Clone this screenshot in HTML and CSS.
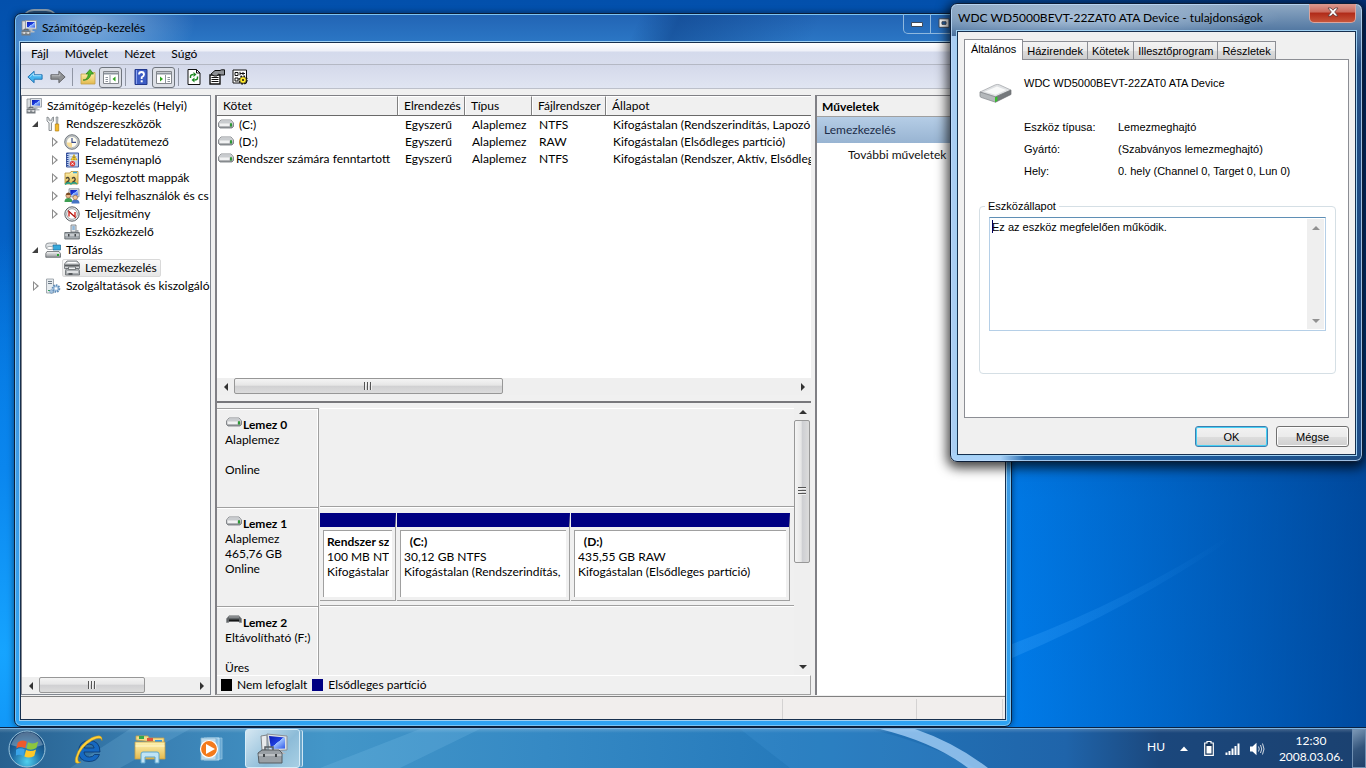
FILE: index.html
```html
<!DOCTYPE html>
<html lang="hu">
<head>
  <meta charset="UTF-8">
  <title>Számítógép-kezelés</title>
  <link rel="stylesheet" href="styles.css">
</head>
<body>
<svg class="defs" aria-hidden="true">
  <defs>
    <linearGradient id="metal" x1="0" y1="0" x2="0" y2="1">
      <stop offset="0" stop-color="#fafafa"/><stop offset="1" stop-color="#8e9296"/>
    </linearGradient>
    <linearGradient id="screen" x1="0" y1="0" x2="1" y2="1">
      <stop offset="0" stop-color="#0a1bb0"/><stop offset=".5" stop-color="#1f3fe0"/><stop offset=".52" stop-color="#9cc0ff"/><stop offset="1" stop-color="#2a55e8"/>
    </linearGradient>
    <linearGradient id="gold" x1="0" y1="0" x2="0" y2="1">
      <stop offset="0" stop-color="#fff3b0"/><stop offset="1" stop-color="#e3b94e"/>
    </linearGradient>
    <linearGradient id="ray" x1="0" y1="0" x2="1" y2="0">
      <stop offset="0" stop-color="#3fa8ff" stop-opacity=".3"/><stop offset="1" stop-color="#3fa8ff" stop-opacity="0"/>
    </linearGradient>
    <radialGradient id="orb" cx=".5" cy=".85" r=".9">
      <stop offset="0" stop-color="#4fd0ee"/><stop offset=".45" stop-color="#1f6ea6"/><stop offset="1" stop-color="#0c2f5c"/>
    </radialGradient>
  </defs>
  <symbol id="i-computer" viewBox="0 0 16 16">
    <path d="M1 1h4v9H1z" fill="#d8dcdf" stroke="#7d8388" stroke-width=".7"/>
    <path d="M4.5.5h11v8.6h-11z" fill="#dfe3e8" stroke="#8a9097" stroke-width=".8"/>
    <path d="M6 2h8v5.6H6z" fill="url(#screen)"/>
    <path d="M8.500 9h3v2h2v1.500h-6z" fill="#b8bdc2"/>
    <path d="M.5 10.500h9v5h-9z" fill="#757b80"/>
    <path d="M3 10.500V9.300h4v1.200" fill="none" stroke="#5c6165"/>
    <path d="M.5 12.800h9" stroke="#c9cdd0" stroke-width=".8"/>
    <path d="M2.500 12h1.200v2H2.500zM6.500 12h1.200v2H6.500z" fill="#f0f0f0"/>
  </symbol>
  <symbol id="i-tools" viewBox="0 0 16 16">
    <path d="M2 1v4l2 2v7.500h2.500V7l2-2V1L7 2v2.200H4V2z" fill="#eceeef" stroke="#74797d" stroke-width=".8"/>
    <path d="M11 1h2l-.4 7h-1.200z" fill="#c5c9cc" stroke="#777c80" stroke-width=".6"/>
    <path d="M10.300 8h3.400v7h-3.400z" fill="#f4ba2a" stroke="#b57f10" stroke-width=".7"/>
  </symbol>
  <symbol id="i-clock" viewBox="0 0 16 16">
    <circle cx="8" cy="8" r="7.300" fill="#c3c7ca" stroke="#686e73" stroke-width=".9"/>
    <circle cx="8" cy="8" r="5.500" fill="#fffdf0" stroke="#9aa0a5" stroke-width=".6"/>
    <path d="M8 8.500v5a5.500 5.500 0 0 1-5.400-5z" fill="#f7dc98"/>
    <path d="M8 4v4.300h4" fill="none" stroke="#3a4c8a" stroke-width="1.200"/>
  </symbol>
  <symbol id="i-eventlog" viewBox="0 0 16 16">
    <path d="M2.500 1h12v14h-12z" fill="#b9cdee" stroke="#40589c"/>
    <path d="M6 3.500h7M6 6h7M6 8.500h7" stroke="#e9f0fb"/>
    <path d="M3.500 1v14" stroke="#2c4a9a" stroke-width="2" stroke-dasharray="1 1"/>
    <path d="M10 2.500l3 5.500H7z" fill="#ffd83c" stroke="#b98d00" stroke-width=".6"/>
    <path d="M10 4.500v1.800M10 6.900v.6" stroke="#222" stroke-width=".8"/>
    <circle cx="8.500" cy="11.700" r="2.700" fill="#dd3a35"/>
    <path d="M7.400 10.600l2.200 2.200M9.600 10.600l-2.200 2.200" stroke="#fff" stroke-width=".9"/>
  </symbol>
  <symbol id="i-shares" viewBox="0 0 16 16">
    <path d="M1 3h5l1-1.500h7V14H1z" fill="url(#gold)" stroke="#b99036" stroke-width=".8"/>
    <path d="M9 2.500h4" stroke="#3aa8d8" stroke-width="1.500"/>
    <path d="M2 8.500q2-2 3 0t-3 4h3.500M8 8.500q2-2 3 0t-3 4h3.500" fill="none" stroke="#4b4433" stroke-width="1.300"/>
    <path d="M1 14.500q3-3 6-.5 3-2.500 6 0" fill="none" stroke="#28a58a" stroke-width="1.500"/>
  </symbol>
  <symbol id="i-users" viewBox="0 0 16 16">
    <path d="M5 .8h10v8H5z" fill="#e0e4ea" stroke="#80868c" stroke-width=".8"/>
    <path d="M6.300 2h7.500v5.500H6.300z" fill="url(#screen)"/>
    <path d="M.5 14q0-4 4-4t4 4z" fill="#3d9e52"/>
    <path d="M7.500 15.500q0-4 4-4t4 4z" fill="#4573c4"/>
    <circle cx="4.300" cy="7.600" r="2.400" fill="#e8b88a" stroke="#87562e" stroke-width=".6"/>
    <circle cx="11.200" cy="9.500" r="2.300" fill="#f0c79d" stroke="#87562e" stroke-width=".6"/>
    <path d="M2 7q0-2.500 2.300-2.500T6.600 7z" fill="#7a4a22"/>
  </symbol>
  <symbol id="i-perf" viewBox="0 0 16 16">
    <circle cx="8" cy="8" r="7.200" fill="#e8eaeb" stroke="#595f64"/>
    <circle cx="8" cy="8" r="5.300" fill="#fff" stroke="#8d9296" stroke-width=".8"/>
    <path d="M5 10.500V5.500l6 5.500V6" fill="none" stroke="#d42a22" stroke-width="1.400"/>
    <path d="M3.800 4.300l8 7.500" stroke="#8c1512" stroke-width=".8"/>
  </symbol>
  <symbol id="i-devmgr" viewBox="0 0 16 16">
    <path d="M7 1h5v7H7z" fill="#e4e7e9" stroke="#6f757a" stroke-width=".8"/>
    <path d="M8.300 3h2.500M8.300 5h2.500" stroke="#3c88c8"/>
    <path d="M12 6h2.500v3H12z" fill="#a6abb0"/>
    <path d="M.8 8.500h14.500v6.500H.8z" fill="#a5abb0" stroke="#5b6166" stroke-width=".8"/>
    <path d="M1 11h14" stroke="#e6e8ea"/>
    <path d="M4 10h1.500v2.500H4zM10.500 10H12v2.500h-1.500z" fill="#45494c"/>
  </symbol>
  <symbol id="i-storage" viewBox="0 0 16 16">
    <path d="M.8 3q0-2 3.500-2h7v6h-8q-2.500 0-2.500-2z" fill="#e2e5e7" stroke="#7c8286" stroke-width=".8"/>
    <path d="M8 3h7.500v5H8z" fill="#36a9dc" stroke="#1c6a98" stroke-width=".7"/>
    <ellipse cx="5" cy="6" rx="3.300" ry="1.600" fill="#fff" stroke="#8d9398" stroke-width=".7"/>
    <path d="M2 9.500h12l1.500 2v3.800H.8v-3.800z" fill="url(#metal)" stroke="#62676b" stroke-width=".8"/>
    <path d="M12 12h2v2h-2z" fill="#28a532"/>
  </symbol>
  <symbol id="i-diskmgmt" viewBox="0 0 16 16">
    <path d="M3 1h10l2.500 3v4.500H.5V4z" fill="#d3d6d8" stroke="#63686c" stroke-width=".8"/>
    <path d="M1 4.500h14v2H1z" fill="#5a5e61"/>
    <path d="M3.500 2.500h9" stroke="#fff"/>
    <path d="M2.500 8.500h11.500l1.500 2V15H1.500v-4.500z" fill="#a9adb0" stroke="#63686c" stroke-width=".8"/>
    <path d="M4.500 7h7v2.500h-7z" fill="#eef0f1" stroke="#55595c" stroke-width=".7"/>
    <path d="M3 12h11" stroke="#f2f3f4" stroke-width="1.500"/>
    <path d="M4.500 15v-2h4v2" fill="#55595c"/>
  </symbol>
  <symbol id="i-services" viewBox="0 0 16 16">
    <path d="M1.500 1h7v14h-7z" fill="#e6ebef" stroke="#8f979e" stroke-width=".8"/>
    <path d="M3 3.500h4M3 5.500h4" stroke="#6c7a86"/>
    <path d="M3 12.500h2" stroke="#2aa34e"/>
    <circle cx="11" cy="10.500" r="3.300" fill="#a8c6e2" stroke="#5f8cb8" stroke-width="2" stroke-dasharray="1.500 1"/>
    <circle cx="11" cy="10.500" r="1.200" fill="#fff"/>
    <circle cx="6.500" cy="13.500" r="1.800" fill="#a8c6e2" stroke="#5f8cb8" stroke-dasharray="1 .7"/>
  </symbol>
  <symbol id="i-drive" viewBox="0 0 16 10">
    <path d="M3 1h10l2.500 3v3.500L14 9H2L.5 7.500V4z" fill="url(#metal)" stroke="#707478" stroke-width=".8"/>
    <path d="M3.200 1.600h9.600L14.500 4h-13z" fill="#c9cccf"/>
    <path d="M1.500 4.500h10v2.700h-10z" fill="#f1f2f3"/>
    <path d="M12 4.300h2v3.200h-2z" fill="#2c9a35"/>
  </symbol>
  <symbol id="i-removable" viewBox="0 0 16 10">
    <path d="M3 .8h10l2.500 3v3.700h-2l-1-1.500h-9l-1 1.500h-2V3.800z" fill="#606467" stroke="#8a8e91" stroke-width=".8"/>
    <path d="M3 2h10" stroke="#a8abad"/>
    <path d="M3 4.500h10v2H3z" fill="#151617"/>
  </symbol>
  <symbol id="i-flag" viewBox="0 0 20 20">
    <path d="M1.500 4.500Q5 1.800 9 4L7.600 9.300Q4 7.200.2 9.500z" fill="#ee5a2c"/>
    <path d="M10 4.400q4 2.200 8.500-.6L17 9.200q-4.500 2.500-8.300.4z" fill="#8cc63e"/>
    <path d="M0 10.600q3.500-2.300 7.300-.2L6 15.800q-4-2-7 .2z" fill="#3aa4e8"/>
    <path d="M8.400 10.800q4 2 8.300-.4l-1.500 5.400q-4.500 2.500-8.200.4z" fill="#ffc928"/>
  </symbol>
</svg>

<main class="desktop">
  <svg class="wallpaper" viewBox="0 0 1366 768" preserveAspectRatio="none" aria-hidden="true">
    <path d="M1012 644Q1130 600 1230 535V540Q1130 608 1012 658z" fill="url(#ray)"/>
  </svg>
  <span class="bin"></span>

  <section class="window main-window">
    <header class="titlebar">
      <svg class="icon"><use href="#i-computer"/></svg>
      <span class="caption">Számítógép-kezelés</span>
      <div class="winbuttons">
        <button aria-label="Kis méret"><svg viewBox="0 0 12 10"><path d="M.5 4.500h11V8.500H.5z" fill="#fff" stroke="#3e4a5a"/></svg></button>
        <button aria-label="Teljes méret"><svg viewBox="0 0 12 10"><path d="M1 .8h10v8.500H1zM4 3.800h4v2.500H4z" fill="#fff" fill-rule="evenodd" stroke="#3e4a5a"/></svg></button>
        <button class="wide" aria-label="Bezárás"></button>
      </div>
    </header>

    <div class="client">
      <nav class="menubar">
        <button>Fájl</button>
        <button>Művelet</button>
        <button>Nézet</button>
        <button>Súgó</button>
      </nav>
      <div class="toolbar">
        <button aria-label="Vissza"><svg viewBox="0 0 18 16"><path d="M1 8l7-6.500v4h9v5H8v4z" fill="#45b4ee" stroke="#1c6cae"/><path d="M3 8l4.300-4v2.600H16" fill="none" stroke="#b5e6ff"/></svg></button>
        <button aria-label="Előre"><svg viewBox="0 0 18 16"><path d="M17 8l-7-6.500v4H1v5h9v4z" fill="#8e9093" stroke="#5b5d60"/><path d="M2 6.600h9V4" fill="none" stroke="#c2c4c6"/></svg></button>
        <span class="sep"></span>
        <button aria-label="Fel"><svg viewBox="0 0 16 16"><path d="M1 5h5l1.500-1.500H15V15H1z" fill="url(#gold)" stroke="#c2a14c" stroke-width=".8"/><path d="M3 11q4 .5 5.500-6H6l4-4.500L13.500 5H11Q9 12 3 11z" fill="#4cb82e" stroke="#2b7f18" stroke-width=".7"/></svg></button>
        <button class="pressed" aria-label="Konzolfa"><svg viewBox="0 0 16 16"><path d="M.5 2.500h15v12H.5z" fill="#fff" stroke="#82868c"/><path d="M1 4.500h14" stroke="#8d949e" stroke-width="2"/><path d="M2.500 8.500H5M2.500 10.500H5M2.500 12.500H5M7 6v8" stroke="#8d949e"/><path d="M12.500 7.500v5L9.500 10z" fill="#2fa51f"/></svg></button>
        <span class="sep"></span>
        <button aria-label="Súgó"><svg viewBox="0 0 16 16"><path d="M2 .5h12v15H2z" fill="#3c5cc4" stroke="#22388c"/><path d="M3.500 1v14" stroke="#8aa2ee"/><path d="M6 5.500Q6 3 8.500 3T11 5.500Q11 7 8.700 8.300V10" fill="none" stroke="#fff" stroke-width="1.800"/><path d="M7.700 11.300h2v2h-2z" fill="#fff"/></svg></button>
        <button class="pressed" aria-label="Művelet panel"><svg viewBox="0 0 16 16"><path d="M.5 2.500h15v12H.5z" fill="#fff" stroke="#82868c"/><path d="M1 4.500h14" stroke="#8d949e" stroke-width="2"/><path d="M9.500 6v8M11.500 8.500H14M11.500 10.500H14M11.500 12.500H14" stroke="#8d949e"/><path d="M4 7.500v5L7 10z" fill="#2fa51f"/></svg></button>
        <span class="sep"></span>
        <button aria-label="Frissítés"><svg viewBox="0 0 16 16"><path d="M2 .5h8.500L14 4v11.500H2z" fill="#fff" stroke="#111"/><path d="M10.500.5V4H14" fill="none" stroke="#111"/><path d="M4.500 9V7.500q0-2 3-2" fill="none" stroke="#1d8a22" stroke-width="1.400"/><path d="M7.500 3v5l3-2.500zM8.500 8.500v5l-3-2.500z" fill="#1d8a22"/><path d="M11.500 7.500V9q0 2-3 2" fill="none" stroke="#1d8a22" stroke-width="1.400"/></svg></button>
        <button aria-label="Tulajdonságok"><svg viewBox="0 0 16 16"><path d="M1 6h10v9H1z" fill="#fff" stroke="#111" stroke-width="1.400"/><path d="M2.500 8.500h7M2.500 10.500h7M2.500 12.500h7" stroke="#111"/><path d="M2 5l4-3.500h5L12.500.8h3V6h-3.500L9.500 5 8 7H5z" fill="#8d9094" stroke="#111"/></svg></button>
        <button aria-label="Beállítások"><svg viewBox="0 0 16 16"><path d="M1 1h13.500v13H1z" fill="#fff" stroke="#111"/><path d="M3 3.500h3v3H3zM3 9h3v3H3z" fill="#fff" stroke="#111"/><path d="M8 4.500h5M8 2.800v3.500M11 3v3" stroke="#111"/><circle cx="11" cy="11" r="3.200" fill="none" stroke="#111" stroke-width="3" stroke-dasharray="1.300 1.213"/><circle cx="11" cy="11" r="3.300" fill="#ffe92c" stroke="#111" stroke-width=".6"/><circle cx="11" cy="11" r="1" fill="#111"/></svg></button>
      </div>

      <div class="panes">
        <aside class="pane tree-pane">
          <ul class="tree">
            <li class="root"><svg class="icon"><use href="#i-computer"/></svg><span>Számítógép-kezelés (Helyi)</span></li>
            <li class="open"><i></i><svg class="icon"><use href="#i-tools"/></svg><span>Rendszereszközök</span></li>
            <li class="sub closed"><i></i><svg class="icon"><use href="#i-clock"/></svg><span>Feladatütemező</span></li>
            <li class="sub closed"><i></i><svg class="icon"><use href="#i-eventlog"/></svg><span>Eseménynapló</span></li>
            <li class="sub closed"><i></i><svg class="icon"><use href="#i-shares"/></svg><span>Megosztott mappák</span></li>
            <li class="sub closed"><i></i><svg class="icon"><use href="#i-users"/></svg><span>Helyi felhasználók és cs</span></li>
            <li class="sub closed"><i></i><svg class="icon"><use href="#i-perf"/></svg><span>Teljesítmény</span></li>
            <li class="sub"><i></i><svg class="icon"><use href="#i-devmgr"/></svg><span>Eszközkezelő</span></li>
            <li class="open"><i></i><svg class="icon"><use href="#i-storage"/></svg><span>Tárolás</span></li>
            <li class="sub selected"><i></i><div><svg class="icon"><use href="#i-diskmgmt"/></svg><span>Lemezkezelés</span></div></li>
            <li class="closed"><i></i><svg class="icon"><use href="#i-services"/></svg><span>Szolgáltatások és kiszolgáló</span></li>
          </ul>
          <div class="scroll-h">
            <button class="left" aria-label="Balra"></button>
            <div class="track"><div class="thumb tree-thumb"><b></b></div></div>
            <button class="right" aria-label="Jobbra"></button>
          </div>
        </aside>

        <div class="center">
          <div class="volumes">
            <div class="volume-list">
              <table>
                <colgroup><col class="c-name"><col class="c-layout"><col class="c-type"><col class="c-fs"><col></colgroup>
                <thead>
                <tr><th>Kötet</th><th>Elrendezés</th><th>Típus</th><th>Fájlrendszer</th><th>Állapot</th></tr>
                </thead>
                <tbody>
                <tr><td><svg class="drive"><use href="#i-drive"/></svg>&nbsp;(C:)</td><td>Egyszerű</td><td>Alaplemez</td><td>NTFS</td><td>Kifogástalan (Rendszerindítás, Lapozó</td></tr>
                <tr><td><svg class="drive"><use href="#i-drive"/></svg>&nbsp;(D:)</td><td>Egyszerű</td><td>Alaplemez</td><td>RAW</td><td>Kifogástalan (Elsődleges partíció)</td></tr>
                <tr><td><svg class="drive"><use href="#i-drive"/></svg>Rendszer számára fenntartott</td><td>Egyszerű</td><td>Alaplemez</td><td>NTFS</td><td>Kifogástalan (Rendszer, Aktív, Elsődleg</td></tr>
                </tbody>
              </table>
            </div>
            <div class="scroll-h">
              <button class="left" aria-label="Balra"></button>
              <div class="track"><div class="thumb list-thumb"><b></b></div></div>
              <button class="right" aria-label="Jobbra"></button>
            </div>
          </div>

          <div class="graphic">
            <div class="graphic-body">
              <div class="disks">
                <div class="disk">
                  <div class="disk-label">
                    <strong><svg class="drive"><use href="#i-drive"/></svg>Lemez 0</strong>
                    <p>Alaplemez</p><p></p><p>Online</p>
                  </div>
                  <div class="parts"></div>
                </div>
                <div class="disk">
                  <div class="disk-label">
                    <strong><svg class="drive"><use href="#i-drive"/></svg>Lemez 1</strong>
                    <p>Alaplemez</p><p>465,76 GB</p><p>Online</p>
                  </div>
                  <div class="parts">
                    <div class="part p-sys"><div><strong>Rendszer sz</strong><p>100 MB NTFS</p><p>Kifogástalan</p></div></div>
                    <div class="part p-c"><div><strong>&nbsp; (C:)</strong><p>30,12 GB NTFS</p><p>Kifogástalan (Rendszerindítás,</p></div></div>
                    <div class="part p-d"><div><strong>&nbsp; (D:)</strong><p>435,55 GB RAW</p><p>Kifogástalan (Elsődleges partíció)</p></div></div>
                  </div>
                </div>
                <div class="disk">
                  <div class="disk-label">
                    <strong><svg class="drive"><use href="#i-removable"/></svg>Lemez 2</strong>
                    <p>Eltávolítható (F:)</p><p></p><p>Üres</p>
                  </div>
                  <div class="parts"></div>
                </div>
              </div>
              <div class="scroll-v">
                <button class="up" aria-label="Fel"></button>
                <div class="track"><div class="thumb"><b></b></div></div>
                <button class="down" aria-label="Le"></button>
              </div>
            </div>
            <div class="legend">
              <span class="swatch black"></span>Nem lefoglalt
              <span class="swatch navy"></span>Elsődleges partíció
            </div>
          </div>
        </div>

        <aside class="pane actions">
          <h2>Műveletek</h2>
          <h3>Lemezkezelés</h3>
          <a href="#">További műveletek</a>
        </aside>
      </div>

      <footer class="statusbar"><span></span><span></span><span></span></footer>
    </div>
  </section>

  <section class="window dialog">
    <header class="titlebar">
      <span class="caption">WDC WD5000BEVT-22ZAT0 ATA Device - tulajdonságok</span>
      <button class="close" aria-label="Bezárás"><svg viewBox="0 0 12 10"><path d="M1 1h3l2 2.200L8 1h3L7.700 5 11 9H8L6 6.800 4 9H1l3.300-4z" fill="#fff" stroke="#5c3a3a" stroke-width=".8"/></svg></button>
    </header>
    <div class="client">
      <div class="tabs" role="tablist">
        <button class="active" role="tab">Általános</button>
        <button role="tab">Házirendek</button>
        <button role="tab">Kötetek</button>
        <button role="tab">Illesztőprogram</button>
        <button role="tab">Részletek</button>
      </div>
      <div class="tabpanel">
        <div class="device">
          <svg viewBox="0 0 34 22">
            <path d="M1 10L17 2.500q2-.6 4 0L33 8 17 15z" fill="#dfe1e3" stroke="#9b9fa3" stroke-width=".7"/>
            <path d="M6 9.700L18.500 4.200 28 8l-11 4.800z" fill="#f8f9f9"/>
            <path d="M1 10l16 5v5.500L2 15.500Q1 15 1 14z" fill="#b4b8bb" stroke="#7d8185" stroke-width=".7"/>
            <path d="M17 15L33 8v4.500L17 20.500z" fill="#75797c" stroke="#6d7174" stroke-width=".7"/>
            <path d="M16.500 15.500l2.500-1v4.700l-2.500 1z" fill="#35c02c"/>
          </svg>
          <span>WDC WD5000BEVT-22ZAT0 ATA Device</span>
        </div>
        <dl>
          <dt>Eszköz típusa:</dt><dd>Lemezmeghajtó</dd>
          <dt>Gyártó:</dt><dd>(Szabványos lemezmeghajtó)</dd>
          <dt>Hely:</dt><dd>0. hely (Channel 0, Target 0, Lun 0)</dd>
        </dl>
        <fieldset>
          <legend><label for="status">Eszközállapot</label></legend>
          <div class="status-box">
            <textarea id="status" readonly>Ez az eszköz megfelelően működik.</textarea>
            <span class="caret"></span>
            <div class="scroll-v disabled">
              <button class="up" aria-label="Fel" disabled></button>
              <div class="track"></div>
              <button class="down" aria-label="Le" disabled></button>
            </div>
          </div>
        </fieldset>
      </div>
      <div class="dialog-buttons">
        <button class="default">OK</button>
        <button>Mégse</button>
      </div>
    </div>
  </section>

  <footer class="taskbar">
    <svg class="glow" viewBox="0 0 1366 40" preserveAspectRatio="none" aria-hidden="true">
      <path d="M70 40L130 0H190L120 40zM320 40L420 0H480L400 40z" fill="#9fe0ff" opacity=".15"/>
      <path d="M740 0h130q60 15 105 40H790z" fill="#4aa0e0" opacity=".2"/>
      <path d="M880 0H915Q955 14 988 40H968Q935 14 880 0z" fill="#b5dbff" opacity=".7"/>
    </svg>
    <button class="start" aria-label="Start">
      <svg viewBox="0 0 38 38"><circle cx="19" cy="19" r="18" fill="url(#orb)" stroke="#9cc6dd" stroke-width="1"/><path d="M3 15Q8 2 19 2t16 13Q19 21 3 15z" fill="#fff" opacity=".28"/><use href="#i-flag" x="8" y="7" width="24" height="24"/></svg>
    </button>
    <button class="task" aria-label="Internet Explorer">
      <svg viewBox="0 0 32 32"><path d="M27 19H11q.5 5 5.500 5 3.500 0 5-2.500h5Q24 28.500 16 28.500 6 28.500 5.500 18.500 6 8 16 7.500q11 0 11 11.500zM11.200 15h10q-.5-4-5-4t-5 4z" fill="#1668c0" stroke="#08366f" stroke-width=".8"/><path d="M8 29Q1 33 2.500 25 6 11 19 4.500 30 0 29 7.500 28 3 19 7.500 8 14 5 24q-1 6 3 5z" fill="#ffd23a" stroke="#c58f10" stroke-width=".5"/></svg>
    </button>
    <button class="task" aria-label="Intéző">
      <svg viewBox="0 0 32 32"><path d="M2 7V3h12l1 2h15v5z" fill="#f2dc8c" stroke="#c4a048" stroke-width=".8"/><path d="M5 3h5v3H5z" fill="#32a84a"/><path d="M13 5h6v3h-6z" fill="#e0533b"/><path d="M21 7h7v3h-7z" fill="#3b9be0"/><path d="M1 9h30v17H1z" fill="url(#gold)" stroke="#c4a048" stroke-width=".8"/><path d="M1.500 13h29" stroke="#fff7cf"/><path d="M7 30V21q0-2 2-2h14q2 0 2 2v9h-4v-6H11v6z" fill="#bfe4f6" stroke="#5ea6cc"/></svg>
    </button>
    <button class="task" aria-label="Windows Media Player">
      <svg viewBox="0 0 32 32"><path d="M12 5h15v21H12z" fill="#7db8de" opacity=".7" stroke="#b4daf0" stroke-width=".8"/><path d="M9 5h15v22H9z" fill="#8cc2e4" stroke="#c7e5f6" stroke-width=".8"/><path d="M6 5h15v22H6z" fill="#bddaec" stroke="#84b4d2" stroke-width=".8"/><circle cx="14" cy="16" r="8.500" fill="#f47a1c" stroke="#fff" stroke-width="1.200"/><path d="M11 11l9 5-9 5z" fill="#fff"/></svg>
    </button>
    <button class="task running" aria-label="Számítógép-kezelés">
      <svg viewBox="0 0 32 32"><path d="M4 3l6-1v15H5z" fill="#e8eaec" stroke="#7d8388"/><path d="M10 1l20 2v14l-18 1z" fill="#dde1e6" stroke="#8a9097"/><path d="M12 3l16 1.500v11L14 16z" fill="url(#screen)"/><path d="M20 18h5l4 3h-9z" fill="#b4b9be"/><path d="M1 20l4-3h17l3 3v10H2z" fill="#9aa0a5" stroke="#565c61"/><path d="M1.500 22h23" stroke="#e0e2e4"/><path d="M8 17v-3h8v3" fill="none" stroke="#565c61" stroke-width="1.500"/><path d="M6 21h2v3H6zM18 21h2v3h-2z" fill="#3f4447"/></svg>
    </button>
    <div class="tray">
      <span class="lang">HU</span>
      <svg class="t-up" viewBox="0 0 8 5"><path d="M0 5l4-4.500L8 5z" fill="#fff"/></svg>
      <svg class="t-bat" viewBox="0 0 10 15"><path d="M3 .5h4V2h2.300v12.300H.7V2H3z" fill="#16365c" stroke="#fff" stroke-width="1.200"/><path d="M2.500 5h5v7.500h-5z" fill="#fff"/></svg>
      <svg class="t-net" viewBox="0 0 16 12"><path d="M.5 9.500h2V12h-2zM3.500 8h2v4h-2zM6.500 5.500h2V12h-2zM9.500 3h2v9h-2zM12.500.5h2V12h-2z" fill="#fff"/></svg>
      <svg class="t-vol" viewBox="0 0 16 14"><path d="M1 4.500h2.500L7.500.8v12.400L3.500 9.500H1z" fill="#fff"/><path d="M9.500 4.500q1.500 2.500 0 5M11.500 3q2.500 4 0 8M13.500 1.500q3 5.500 0 11" fill="none" stroke="#fff" stroke-width=".8"/></svg>
      <time><span>12:30</span><span>2008.03.06.</span></time>
      <button class="show-desktop" aria-label="Asztal megjelenítése"></button>
    </div>
  </footer>
</main>
</body>
</html>
```
FILE: styles.css
```css
* {
  box-sizing: border-box;
}
body {
  margin: 0;
  font-family: Lato, "Segoe UI", sans-serif;
  font-size: 12px;
  line-height: 16px;
  color: #000;
}
button {
  font: inherit;
  color: inherit;
  margin: 0;
  padding: 0;
  border: 0;
  background: none;
}
p, h2, h3, ul, dl, dd {
  margin: 0;
  padding: 0;
}
.defs {
  position: absolute;
  width: 0;
  height: 0;
}
.icon {
  width: 16px;
  height: 16px;
  flex: none;
}
.drive {
  width: 16px;
  height: 10px;
  flex: none;
}

/* desktop */
.desktop {
  position: relative;
  height: 100vh;
  overflow: hidden;
  background:
    radial-gradient(ellipse at 0% 85%, #16a4ff 0, #0a86ee 20%, transparent 45%),
    linear-gradient(90deg, transparent 72%, rgba(0, 22, 80, .5) 100%),
    linear-gradient(180deg, #0350ac 0, #0460c4 30%, #007cea 65%, #0080f0 100%);
}
.wallpaper {
  position: absolute;
  width: 100%;
  height: 100%;
}
.bin {
  position: absolute;
  left: 22px;
  top: 9px;
  width: 36px;
  height: 12px;
  border-radius: 14px 14px 0 0;
  border-top: 2px solid #8fa3b4;
  background: #27517c;
}

/* windows */
.window {
  position: absolute;
  display: flex;
  flex-direction: column;
  border: 1px solid #0c1e38;
  border-radius: 7px;
}
.main-window {
  left: 14px;
  top: 13px;
  right: 354px;
  bottom: 41px;
  padding: 0 5px 6px;
  background:
    radial-gradient(ellipse 110px 60px at 70px 8px, rgba(190, 215, 240, .6), transparent),
    linear-gradient(115deg, transparent 62%, rgba(10, 60, 130, .5) 66%, transparent 80%) 0 0 / 100% 30px no-repeat,
    linear-gradient(180deg, #2264b4 0, #2c78c6 30px, #3f9ae4 60%, #2ea2f2 100%);
  box-shadow: inset 0 0 0 1px #7cc4f4, 0 0 6px rgba(0, 0, 0, .5);
}
.titlebar {
  display: flex;
  align-items: center;
  flex: none;
}
.main-window .titlebar {
  height: 28px;
  gap: 5px;
  padding-left: 1px;
}
.client {
  flex: 1;
  min-height: 0;
  display: flex;
  flex-direction: column;
  background: #f0f0f0;
  border: 1px solid #17304f;
  outline: 1px solid #9fd0f2;
}
.winbuttons {
  display: flex;
  align-self: flex-start;
  margin-left: auto;
  border: 1px solid #8fb8de;
  border-top: 0;
  border-radius: 0 0 5px 5px;
}
.winbuttons button {
  width: 27px;
  height: 19px;
  border-right: 1px solid #8fb8de;
}
.winbuttons .wide {
  width: 47px;
  border-right: 0;
}
.winbuttons svg {
  width: 12px;
  height: 10px;
}
.menubar {
  display: flex;
  height: 22px;
  flex: none;
  padding-left: 2px;
  background: linear-gradient(180deg, #fff 0, #eef0f8 8px, #d4daec 9px, #d8dded 100%);
  border-bottom: 1px solid #b4b8c4;
}
.menubar button {
  padding: 0 8px;
}
.toolbar {
  display: flex;
  align-items: center;
  height: 24px;
  flex: none;
  padding: 1px 0 0 2px;
  background: linear-gradient(180deg, #d4d9ea, #e0e5f2);
  border-bottom: 1px solid #bcc0ca;
}
.toolbar button {
  width: 23px;
  height: 21px;
  display: grid;
  place-items: center;
}
.toolbar svg {
  width: 16px;
  height: 16px;
}
.toolbar .pressed {
  border: 1px solid #6f757e;
  border-radius: 3px;
  background: #dcdfe6;
}
.toolbar .sep {
  width: 1px;
  height: 18px;
  margin: 0 3px;
  background: #9096a4;
}

/* panes */
.panes {
  flex: 1;
  min-height: 0;
  display: flex;
  gap: 4px;
  padding: 6px 0 1px;
}
.pane {
  background: #fff;
  border: 1px solid #828790;
  min-width: 0;
}
.tree-pane {
  width: 190px;
  flex: none;
  display: flex;
  flex-direction: column;
}
.tree {
  flex: 1;
  list-style: none;
  padding: 1px 0 0 4px;
  overflow: hidden;
}
.tree li, .tree li div {
  display: flex;
  align-items: center;
  height: 18px;
  gap: 5px;
  white-space: nowrap;
}
.tree li i {
  width: 10px;
  margin: 0 0 0 4px;
  height: 10px;
  flex: none;
}
.tree li.sub i {
  margin-left: 23px;
}
.tree .open i {
  background: #404040;
  clip-path: polygon(8px 2px, 8px 8px, 2px 8px);
}
.tree .closed i {
  background: #8c8c8c;
  clip-path: polygon(evenodd, 3px 0, 9px 5px, 3px 10px, 3px 0, 4px 2px, 4px 8px, 7px 5px, 4px 2px);
}
.tree .selected div {
  margin-left: -2px;
  padding: 0 3px 0 1px;
  border: 1px solid #d9d9d9;
  border-radius: 2px;
  background: linear-gradient(#fafafa, #e6e6e6);
}

/* scrollbars */
.scroll-h {
  display: flex;
  height: 17px;
  flex: none;
  background: #efefef;
}
.scroll-v {
  display: flex;
  flex-direction: column;
  width: 17px;
  flex: none;
  background: #efefef;
}
.track {
  flex: 1;
  min-height: 0;
}
.scroll-h button, .scroll-v button {
  width: 17px;
  height: 17px;
  flex: none;
  display: grid;
  place-items: center;
}
.scroll-h button::before, .scroll-v button::before {
  content: "";
  border: 4px solid transparent;
}
.scroll-h .left::before {
  border-right-color: #333;
  border-left: 0;
}
.scroll-h .right::before {
  border-left-color: #333;
  border-right: 0;
}
.scroll-v .up::before {
  border-bottom-color: #333;
  border-top: 0;
}
.scroll-v .down::before {
  border-top-color: #333;
  border-bottom: 0;
}
.scroll-v.disabled button::before {
  opacity: .5;
}
.thumb {
  display: grid;
  place-items: center;
  border: 1px solid #979797;
  border-radius: 2px;
}
.scroll-h .thumb {
  height: 16px;
  background: linear-gradient(180deg, #f4f4f4 0, #e6e6e6 45%, #d0d0d2 50%, #dcdcdc 100%);
}
.scroll-v .thumb {
  width: 16px;
  height: 60%;
  background: linear-gradient(90deg, #f4f4f4 0, #e6e6e6 45%, #cdced2 50%, #dcdcdc 100%);
}
.thumb b {
  width: 8px;
  height: 8px;
}
.scroll-h .thumb b {
  background: repeating-linear-gradient(90deg, #555 0 1px, #f0f0f0 1px 2px, transparent 2px 3px);
}
.scroll-v .thumb b {
  background: repeating-linear-gradient(180deg, #555 0 1px, #f0f0f0 1px 2px, transparent 2px 3px);
}
.tree-thumb {
  width: 69%;
}
.list-thumb {
  width: 48%;
}

/* volume list */
.center {
  width: 596px;
  flex: none;
  display: flex;
  flex-direction: column;
  border-left: 2px solid #808085;
  border-top: 1px solid #808085;
  border-bottom: 1px solid #a0a0a0;
}
.volumes {
  flex: 1;
  min-height: 0;
  display: flex;
  flex-direction: column;
  padding-bottom: 6px;
}
.volume-list {
  flex: 1;
  background: #fff;
  overflow: hidden;
}
table {
  width: 100%;
  table-layout: fixed;
  border-collapse: separate;
  border-spacing: 0;
}
.c-name { width: 181px; }
.c-layout { width: 67px; }
.c-type { width: 67px; }
.c-fs { width: 74px; }
th, td {
  padding: 0 0 0 7px;
  height: 17px;
  text-align: left;
  font-weight: normal;
  white-space: nowrap;
  overflow: hidden;
}
th {
  height: 20px;
  padding-left: 6px;
  background: #f0f0f0;
  border-right: 1px solid #808080;
  border-bottom: 1px solid #696969;
  border-top: 1px solid #fff;
  box-shadow: inset 1px 0 #fff;
}
th:last-child {
  border-right: 0;
}
td:first-child {
  padding-left: 1px;
}
td .drive {
  margin-right: 2px;
}

/* graphical view */
.graphic {
  flex: 0 0 293px;
  min-height: 0;
  display: flex;
  flex-direction: column;
  border-top: 2px solid #77777b;
}
.graphic-body {
  flex: 1;
  min-height: 0;
  display: flex;
}
.disks {
  flex: 1;
  min-width: 0;
  padding-top: 5px;
  overflow: hidden;
}
.disk {
  display: flex;
  height: 99px;
}
.disk-label {
  width: 102px;
  flex: none;
  padding: 8px 0 0 8px;
  border-top: 1px solid #a0a0a0;
  border-right: 1px solid #a0a0a0;
  box-shadow: inset -1px 1px #fff;
  line-height: 15px;
  white-space: nowrap;
}
.disk-label p, .part p {
  height: 15px;
}
.disk-label strong, .part strong {
  display: block;
  height: 15px;
}
.disk-label .drive {
  margin: 0 1px 2px;
}
.parts {
  flex: 1;
  min-width: 0;
  display: flex;
  gap: 1px;
  margin-left: 1px;
  padding: 5px 4px 4px 0;
  border-top: 1px solid #fff;
  border-bottom: 1px solid #a0a0a0;
}
.part {
  min-width: 0;
  padding: 3px;
  border-top: 14px solid #000082;
  border-right: 1px solid #a0a0a0;
  border-bottom: 1px solid #a0a0a0;
}
.part div {
  height: 100%;
  padding: 3px 3px 0 3px;
  line-height: 15px;
  white-space: nowrap;
  overflow: hidden;
  background: #fff;
  border-top: 1px solid #a0a0a0;
  border-left: 1px solid #a0a0a0;
}
.part strong, .part p {
  overflow: hidden;
}
.p-sys { flex: 69 0 0; }
.p-c { flex: 166 0 0; }
.p-d { flex: 212 0 0; }
.legend {
  display: flex;
  align-items: center;
  gap: 5px;
  height: 19px;
  flex: none;
  padding-left: 4px;
  border-top: 1px solid #fff;
  border-right: 1px solid #a0a0a0;
}
.swatch {
  width: 11px;
  height: 12px;
}
.black { background: #000; }
.navy { background: #000082; }

/* actions */
.actions {
  flex: 1;
  border: 0;
  border-left: 2px solid #808085;
  border-top: 1px solid #808085;
}
.actions h2 {
  height: 21px;
  padding: 3px 0 0 5px;
  font-size: 12px;
  background: #f0f0f0;
  border-bottom: 1px solid #a0a0a0;
}
.actions h3 {
  height: 26px;
  padding: 5px 7px;
  font-size: 12px;
  font-weight: normal;
  color: #1c2c48;
  background: linear-gradient(180deg, #b5cde6, #98b4d2);
}
.actions a {
  display: block;
  padding: 4px 0 0 31px;
  color: #111;
  text-decoration: none;
  white-space: nowrap;
}
.statusbar {
  display: flex;
  height: 23px;
  flex: none;
  padding: 2px 2px 0 0;
  border-top: 1px solid #808080;
  background: #f1eeed;
}
.statusbar span {
  border-right: 1px solid #d4d2d2;
}
.statusbar span:nth-child(1) { flex: 763; }
.statusbar span:nth-child(2) { flex: 133; }
.statusbar span:nth-child(3) { flex: 85; }

/* properties dialog */
.dialog {
  top: 3px;
  right: 3px;
  width: 413px;
  padding: 0 6px 6px;
  background:
    linear-gradient(90deg, #a9d2f8 0, #a9d2f8 12%, #2a6db0 18%, #1d5a9c 60%, #1e4c80 100%) 0 100% / 100% 8px no-repeat,
    radial-gradient(ellipse 200px 22px at 130px 14px, rgba(190, 210, 230, .75), transparent),
    linear-gradient(90deg, #a9cdf2 0, #a9cdf2 8px, transparent 9px) 0 100% / 100% 93% no-repeat,
    linear-gradient(180deg, #8fa9c4 0, #4f75a0 28px, #1f4a80 60px, #1d4d88 100%);
  box-shadow: inset 0 0 0 1px rgba(190, 220, 250, .8), 0 3px 12px 3px rgba(0, 0, 0, .75);
}
.dialog .titlebar {
  height: 27px;
  padding-left: 1px;
}
.close {
  align-self: flex-start;
  width: 47px;
  height: 19px;
  margin-left: auto;
  border: 1px solid #dca49c;
  border-top: 0;
  border-radius: 0 0 5px 5px;
  background: linear-gradient(180deg, #dc9a90 0, #cc6a5c 45%, #b02a18 50%, #c8553a 100%);
}
.close svg {
  width: 12px;
  height: 10px;
}
.dialog .client {
  padding: 7px 6px;
  font-family: "Liberation Sans", Arial, sans-serif;
  font-size: 11px;
  line-height: 14px;
}
.tabs {
  display: flex;
  align-items: flex-end;
}
.tabs button {
  height: 18px;
  padding: 0 4px;
  white-space: nowrap;
  border: 1px solid #8c8e94;
  border-left-width: 0;
  border-bottom: 0;
  background: linear-gradient(180deg, #f3f3f3 0, #ebebeb 50%, #dddddd 51%, #cdcdcd 100%);
}
.tabs .active {
  z-index: 1;
  height: 21px;
  margin-bottom: -1px;
  padding: 0 6px 2px;
  border-left-width: 1px;
  background: #fff;
}
.tabpanel {
  height: 359px;
  padding: 16px 12px 0 14px;
  background: #fff;
  border: 1px solid #8c8e94;
}
.device {
  display: flex;
  gap: 12px;
  height: 36px;
}
.device svg {
  width: 33px;
  height: 22px;
  margin-top: 6px;
}
dl {
  display: grid;
  grid-template-columns: 94px 1fr;
  row-gap: 8px;
  padding: 8px 0 0 45px;
}
fieldset {
  height: 175px;
  margin: 21px 0 0;
  padding: 4px 9px 0;
  border: 1px solid #d5dfe5;
  border-radius: 4px;
}
legend {
  padding: 0 3px;
  margin-left: -4px;
}
.status-box {
  position: relative;
  display: flex;
  height: 114px;
  padding: 1px;
  border: 1px solid #b5cfe7;
  border-top-color: #5f8fb5;
}
textarea {
  flex: 1;
  min-width: 0;
  padding: 1px;
  border: 0;
  outline: 0;
  resize: none;
  overflow: hidden;
  font: inherit;
  color: inherit;
  background: #fff;
}
.caret {
  position: absolute;
  left: 2px;
  top: 2px;
  width: 1px;
  height: 13px;
  background: #000060;
}
.dialog-buttons {
  display: flex;
  justify-content: flex-end;
  gap: 8px;
  padding-top: 8px;
}
.dialog-buttons button {
  width: 73px;
  height: 21px;
  border: 1px solid #707070;
  border-radius: 3px;
  box-shadow: inset 0 0 0 1px #fcfcfc;
  background: linear-gradient(180deg, #f2f2f2 0, #ebebeb 50%, #dddddd 51%, #cfcfcf 100%);
}
.dialog-buttons .default {
  border-color: #3c7fb1;
  box-shadow: inset 0 0 0 1px #46d0f4;
}

/* taskbar */
.taskbar {
  position: absolute;
  left: 0;
  right: 0;
  bottom: 0;
  height: 40px;
  display: flex;
  border-top: 1px solid #7fb4de;
  box-shadow: 0 -1px #0b2140;
  color: #fff;
  background:
    linear-gradient(180deg, rgba(255, 255, 255, .18) 0, transparent 4px),
    linear-gradient(90deg, #27608f 0, #3a81b4 12%, #4396c8 24%, #3589c4 40%, #2478ba 60%, #1f64aa 78%, #1b477c 85%, #1b4170 100%);
}
.glow {
  position: absolute;
  width: 100%;
  height: 100%;
}
.taskbar button {
  position: relative;
  display: grid;
  place-items: center;
}
.start {
  width: 54px;
}
.start svg {
  width: 38px;
  height: 38px;
}
.task {
  width: 61px;
  padding-left: 8px;
}
.task svg {
  width: 32px;
  height: 32px;
}
.taskbar .running {
  width: 55px;
  margin-left: 8px;
  padding: 0;
  border: 1px solid #d6ecf8;
  border-radius: 3px;
  background: linear-gradient(135deg, #d5e7f2 0, #8dbcd8 60%, #a8cfe4 100%);
  box-shadow: 3px 0 0 -1px #6ba6ca, 4px 0 0 -1px #cfe6f3;
}
.tray {
  position: relative;
  display: flex;
  align-items: center;
  margin-left: auto;
}
.lang {
  margin: 0 15px 4px 0;
}
.t-up {
  width: 8px;
  height: 5px;
  margin-right: 16px;
}
.t-bat {
  width: 10px;
  height: 15px;
  margin-right: 11px;
}
.t-net {
  width: 16px;
  height: 12px;
  margin-right: 8px;
}
.t-vol {
  width: 16px;
  height: 14px;
}
time {
  width: 82px;
  margin-left: 5px;
  display: flex;
  flex-direction: column;
  align-items: center;
}
.show-desktop {
  width: 14px;
  height: 39px;
  border: 1px solid #6f8fb2;
  background: linear-gradient(150deg, #7c98b6 0, #34557c 50%, #1f406a 100%);
}
```
